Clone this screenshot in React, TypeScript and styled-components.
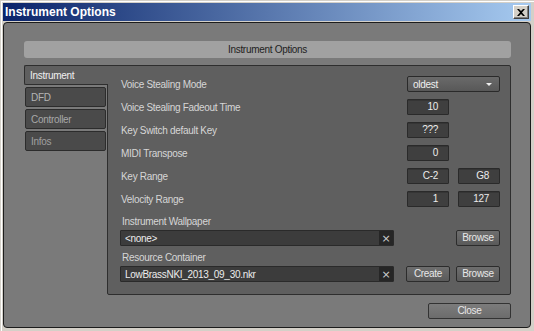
import * as React from "react";
import styled, { createGlobalStyle } from "styled-components";

const GlobalStyle = createGlobalStyle`
    html, body {
        margin: 0;
        padding: 0;
        background: #d4d0c8;
    }
    * {
        box-sizing: border-box;
    }
`

const uiFont = `"Liberation Sans", Arial, sans-serif`

const CWindow = styled.div`
    width: 534px;
    height: 331px;
    background: #d4d0c8;
    border-top: 1px solid #d4d0c8;
    border-left: 1px solid #d4d0c8;
    padding: 2px 3px 3px 2px;
    display: flex;
    flex-direction: column;
    box-shadow: inset 1px 1px 0 #ffffff;
`

const CTitleBar = styled.div`
    height: 18px;
    flex: 0 0 18px;
    margin-bottom: 1px;
    padding: 0 2px 0 2px;
    display: flex;
    align-items: center;
    justify-content: space-between;
    background: linear-gradient(to right, #0a246a, #a6caf0);

    h1 {
        margin: 0;
        font: bold 12px "Liberation Sans", Arial, sans-serif;
        color: #ffffff;
    }
`

const CCaptionButton = styled.div`
    width: 16px;
    height: 14px;
    background: #d4d0c8;
    border: 1px solid;
    border-color: #ffffff #404040 #404040 #ffffff;
    box-shadow: inset -1px -1px 0 #808080;
    display: flex;
    align-items: center;
    justify-content: center;
`

const CDialog = styled.div`
    flex: 1;
    background: #7a7a7a;
    border: 1px solid #1c1c1c;
    border-radius: 4px;
    padding: 18px 19px 0 20px;
    display: flex;
    flex-direction: column;
    font-family: ${uiFont};
    font-size: 10px;
    letter-spacing: -0.3px;
`

const CHeader = styled.div`
    height: 17px;
    background: #a1a1a1;
    border-radius: 3px;
    display: flex;
    align-items: center;
    justify-content: center;
    color: #1e1e1e;
    margin-bottom: 7px;
`

const CBody = styled.div`
    display: flex;
    height: 230px;
`

const CTabs = styled.div`
    flex: 0 0 84px;
    display: flex;
    flex-direction: column;
    margin-right: -1px;
    position: relative;
    z-index: 1;
`

const CTab = styled.div<{ $tone?: string }>`
    display: flex;
    align-items: center;
    padding-left: 5px;
    color: ${p => p.$tone ?? '#f0f0f0'};

    &.active {
        height: 20px;
        background: #5f5f5f;
        border: 1px solid #2e2e2e;
        border-right: none;
        border-radius: 2px 0 0 2px;
        margin-bottom: 2px;
    }

    &.idle {
        width: 81px;
        height: 20px;
        margin: 0 0 2px 1px;
        background: #4a4a4a;
        border: 1px solid #2c2c2c;
        border-radius: 2px;
    }
`

const CPanel = styled.div`
    flex: 1;
    background: #5f5f5f;
    border: 1px solid #2e2e2e;
    border-radius: 0 2px 2px 2px;
    padding: 10px 10px 0 13px;
    display: flex;
    flex-direction: column;
`

const CRow = styled.div`
    display: flex;
    align-items: center;
    justify-content: space-between;
    height: 16px;
    margin-bottom: 7px;
    color: #d6d6d6;
`

const CControls = styled.div`
    width: 93px;
    display: flex;
    justify-content: space-between;
`

const CValue = styled.div`
    width: 42px;
    height: 16px;
    background: #3f3f3f;
    border: 1px solid #2a2a2a;
    border-radius: 1px;
    box-shadow: inset 0 1px 0 #353535;
    color: #ececec;
    text-align: right;
    padding-right: 10px;
    line-height: 14px;
`

const CDropdown = styled.div`
    width: 93px;
    height: 16px;
    background: linear-gradient(#6a6a6a, #585858);
    border: 1px solid #2a2a2a;
    border-radius: 2px;
    display: flex;
    align-items: center;
    justify-content: space-between;
    padding: 0 7px 0 5px;
    color: #f0f0f0;
`

const CArrow = styled.span`
    width: 0;
    height: 0;
    border-left: 3px solid transparent;
    border-right: 3px solid transparent;
    border-top: 3px solid #f0f0f0;
`

const CCaption = styled.div`
    color: #d6d6d6;
    line-height: 13px;
    margin: 1px 0 2px 1px;
`

const CFileRow = styled.div`
    display: flex;
    align-items: center;
    height: 16px;
    margin-bottom: 4px;
`

const CPath = styled.div`
    width: 274px;
    height: 16px;
    margin-left: -1px;
    background: #3c3c3c;
    border: 1px solid #2a2a2a;
    border-radius: 1px;
    display: flex;
    align-items: center;
    justify-content: space-between;
    padding: 0 0 0 4px;
    color: #ececec;
`

const CClear = styled.span`
    width: 14px;
    height: 14px;
    background: #262626;
    color: #cfcfcf;
    font: 11px "DejaVu Sans", sans-serif;
    display: flex;
    align-items: center;
    justify-content: center;
`

const CButtons = styled.div`
    margin-left: auto;
    display: flex;
    gap: 6px;
`

const CButton = styled.button<{ $width?: number }>`
    width: ${p => p.$width ?? 44}px;
    height: 16px;
    padding: 0;
    background: linear-gradient(#6e6e6e, #5a5a5a);
    border: 1px solid #2c2c2c;
    border-radius: 2px;
    color: #e8e8e8;
    font-family: ${uiFont};
    font-size: 10px;
    letter-spacing: -0.3px;
    line-height: 14px;
`

const CFooter = styled.div`
    display: flex;
    justify-content: flex-end;
    margin-top: 8px;
`

const CCloseButton = styled(CButton)`
    background: linear-gradient(#7c7c7c, #6c6c6c);
    border-color: #333333;
`

const tabs = [
    { name: 'DFD', tone: '#b4b4b4' },
    { name: 'Controller', tone: '#a8a8a8' },
    { name: 'Infos', tone: '#a0a0a0' },
]

function App() {
    return <>
        <GlobalStyle />
        <CWindow>
            <CTitleBar>
                <h1>Instrument Options</h1>
                <CCaptionButton>
                    <svg width="8" height="7" viewBox="0 0 8 7">
                        <path d="M0 0h2l2 2 2-2h2L5 3.5 8 7H6L4 5 2 7H0l3-3.5z" fill="#000" />
                    </svg>
                </CCaptionButton>
            </CTitleBar>

            <CDialog>
                <CHeader>Instrument Options</CHeader>

                <CBody>
                    <CTabs>
                        <CTab className="active">Instrument</CTab>
                        {tabs.map(t => <CTab key={t.name} className="idle" $tone={t.tone}>{t.name}</CTab>)}
                    </CTabs>

                    <CPanel>
                        <CRow>
                            <span>Voice Stealing Mode</span>
                            <CDropdown>oldest<CArrow /></CDropdown>
                        </CRow>
                        <CRow>
                            <span>Voice Stealing Fadeout Time</span>
                            <CControls><CValue>10</CValue></CControls>
                        </CRow>
                        <CRow>
                            <span>Key Switch default Key</span>
                            <CControls><CValue>???</CValue></CControls>
                        </CRow>
                        <CRow>
                            <span>MIDI Transpose</span>
                            <CControls><CValue>0</CValue></CControls>
                        </CRow>
                        <CRow>
                            <span>Key Range</span>
                            <CControls><CValue>C-2</CValue><CValue>G8</CValue></CControls>
                        </CRow>
                        <CRow>
                            <span>Velocity Range</span>
                            <CControls><CValue>1</CValue><CValue>127</CValue></CControls>
                        </CRow>

                        <CCaption>Instrument Wallpaper</CCaption>
                        <CFileRow>
                            <CPath>&lt;none&gt;<CClear>×</CClear></CPath>
                            <CButtons>
                                <CButton>Browse</CButton>
                            </CButtons>
                        </CFileRow>

                        <CCaption>Resource Container</CCaption>
                        <CFileRow>
                            <CPath>LowBrassNKI_2013_09_30.nkr<CClear>×</CClear></CPath>
                            <CButtons>
                                <CButton>Create</CButton>
                                <CButton>Browse</CButton>
                            </CButtons>
                        </CFileRow>
                    </CPanel>
                </CBody>

                <CFooter>
                    <CCloseButton $width={83}>Close</CCloseButton>
                </CFooter>
            </CDialog>
        </CWindow>
    </>
}

export default App;
